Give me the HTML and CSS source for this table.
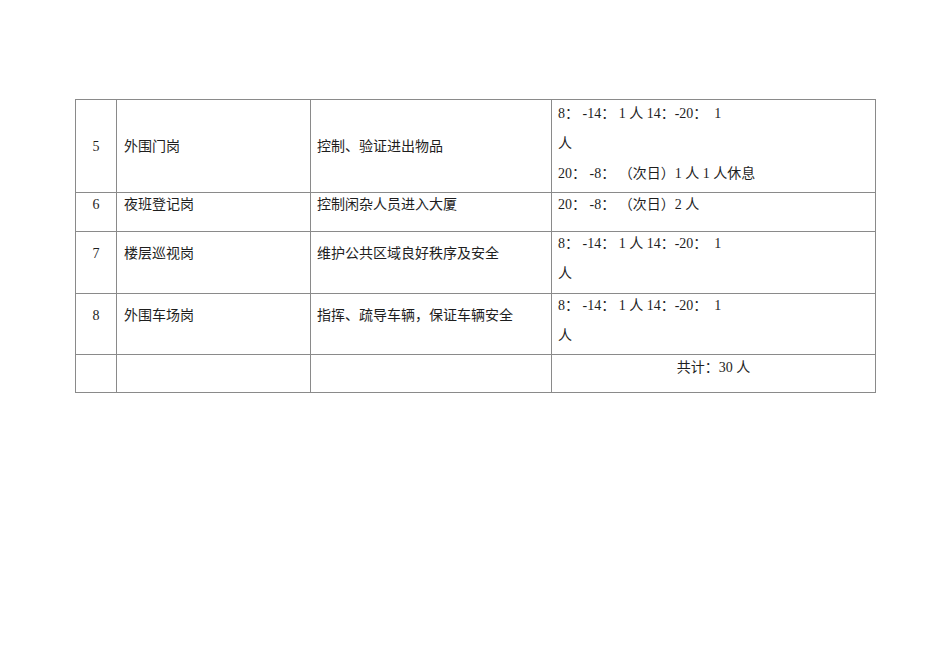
FILE: index.html
```html
<!DOCTYPE html>
<html lang="zh-CN">
<head>
<meta charset="utf-8">
<title>岗位设置</title>
<link rel="stylesheet" href="styles.css">
</head>
<body>
<table class="posts">
  <colgroup>
    <col class="c-no">
    <col class="c-name">
    <col class="c-duty">
    <col class="c-shift">
  </colgroup>
  <tbody>
    <tr class="r5">
      <td class="no">5</td>
      <td class="name">外围门岗</td>
      <td class="duty">控制、验证进出物品</td>
      <td class="shift">
        <div class="line">8：&nbsp;-14：&nbsp;1 人 14：-20：&nbsp;&nbsp;1</div>
        <div class="line">人</div>
        <div class="line">20：&nbsp;-8：&nbsp;（次日）1 人 1 人休息</div>
      </td>
    </tr>
    <tr class="r6">
      <td class="no">6</td>
      <td class="name">夜班登记岗</td>
      <td class="duty">控制闲杂人员进入大厦</td>
      <td class="shift">
        <div class="line">20：&nbsp;-8：&nbsp;（次日）2 人</div>
      </td>
    </tr>
    <tr class="r7">
      <td class="no">7</td>
      <td class="name">楼层巡视岗</td>
      <td class="duty">维护公共区域良好秩序及安全</td>
      <td class="shift">
        <div class="line">8：&nbsp;-14：&nbsp;1 人 14：-20：&nbsp;&nbsp;1</div>
        <div class="line">人</div>
      </td>
    </tr>
    <tr class="r8">
      <td class="no">8</td>
      <td class="name">外围车场岗</td>
      <td class="duty">指挥、疏导车辆，保证车辆安全</td>
      <td class="shift">
        <div class="line">8：&nbsp;-14：&nbsp;1 人 14：-20：&nbsp;&nbsp;1</div>
        <div class="line">人</div>
      </td>
    </tr>
    <tr class="r9">
      <td class="no"></td>
      <td class="name"></td>
      <td class="duty"></td>
      <td class="shift total">
        <div class="line">共计：30 人</div>
      </td>
    </tr>
  </tbody>
</table>
</body>
</html>
```

FILE: styles.css
```css
html, body {
  margin: 0;
  padding: 0;
  background: #ffffff;
}

body {
  font-family: "Liberation Serif", "Noto Sans CJK SC", serif;
  font-size: 14px;
  color: #1e1e1e;
}

.posts {
  margin: 99px 0 0 75px;
  border-collapse: collapse;
  table-layout: fixed;
  width: 800px;
}

.c-no { width: 41px; }
.c-name { width: 194px; }
.c-duty { width: 241px; }
.c-shift { width: 324px; }

.posts td {
  border: 1px solid #8a8a8a;
  padding: 0 6px;
  vertical-align: top;
  line-height: 23px;
  box-sizing: border-box;
}

.posts td.no {
  text-align: center;
  padding: 0;
}

.posts td.name {
  padding-left: 7px;
}

.line {
  line-height: 23px;
  height: 23px;
  margin-bottom: 7px;
  white-space: nowrap;
}

.line:last-child {
  margin-bottom: 0;
}

.total {
  text-align: center;
}

.r5 { height: 93px; }
.r6 { height: 39px; }
.r7 { height: 62px; }
.r8 { height: 61px; }
.r9 { height: 38px; }

.r5 td.no, .r5 td.name, .r5 td.duty { padding-top: 35px; }
.r5 td.shift { padding-top: 2px; }
.r6 td { padding-top: 0; }
.r7 td.no, .r7 td.name, .r7 td.duty { padding-top: 10px; }
.r8 td.no, .r8 td.name, .r8 td.duty { padding-top: 10px; }
.r9 td.shift { padding-top: 1px; }
```
